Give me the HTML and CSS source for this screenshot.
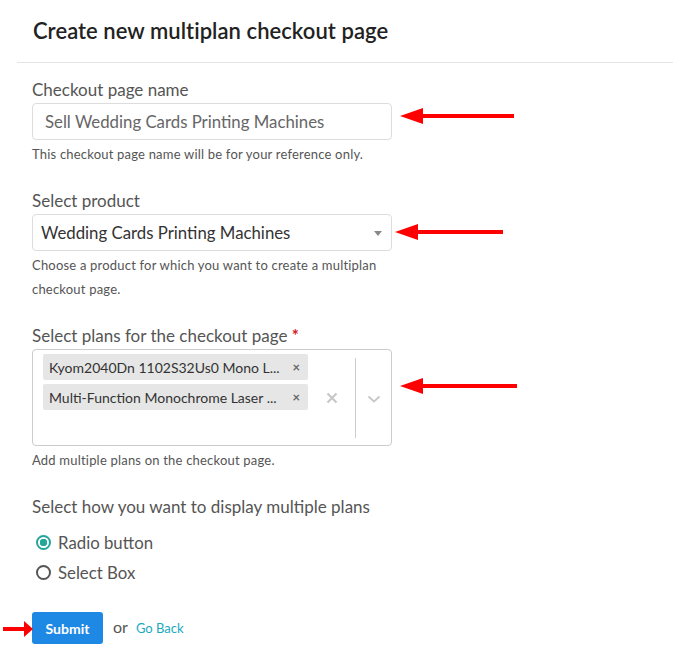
FILE: index.html
```html
<!DOCTYPE html>
<html lang="en">
<head>
<meta charset="utf-8">
<title>Create new multiplan checkout page</title>
<link rel="stylesheet" href="styles.css">
</head>
<body>
<div class="page">
  <div class="header"><h1 class="title">Create new multiplan checkout page</h1></div>
  <form class="form">
    <div class="group first">
      <label class="label">Checkout page name</label>
      <div class="input">Sell Wedding Cards Printing Machines</div>
      <p class="help">This checkout page name will be for your reference only.</p>
    </div>
    <div class="group">
      <label class="label">Select product</label>
      <div class="input select">
        <span class="select-text">Wedding Cards Printing Machines</span>
        <span class="caret"></span>
      </div>
      <p class="help narrow">Choose a product for which you want to create a multiplan checkout page.</p>
    </div>
    <div class="group">
      <label class="label">Select plans for the checkout page <span class="req">*</span></label>
      <div class="multi">
        <div class="tags">
          <div class="tag"><span class="tag-text">Kyom2040Dn 1102S32Us0 Mono L...</span><span class="tag-x">×</span></div>
          <div class="tag"><span class="tag-text">Multi-Function Monochrome Laser ...</span><span class="tag-x">×</span></div>
        </div>
        <div class="clear">
          <svg width="12" height="12" viewBox="0 0 12 12"><path d="M1.5 1.5 L10.5 10.5 M10.5 1.5 L1.5 10.5" stroke="#c8c8c8" stroke-width="2.2" fill="none"/></svg>
        </div>
        <div class="sep"></div>
        <div class="chev">
          <svg width="14" height="8" viewBox="0 0 14 8"><path d="M1.5 1.5 L7 6.5 L12.5 1.5" stroke="#c8c8c8" stroke-width="1.8" fill="none"/></svg>
        </div>
      </div>
      <p class="help">Add multiple plans on the checkout page.</p>
    </div>
    <div class="group">
      <label class="label">Select how you want to display multiple plans</label>
      <div class="radios">
        <div class="radio-row"><span class="radio on"></span><span class="radio-label">Radio button</span></div>
        <div class="radio-row"><span class="radio"></span><span class="radio-label">Select Box</span></div>
      </div>
    </div>
    <div class="actions">
      <button type="button" class="submit">Submit</button>
      <span class="or">or</span>
      <a class="back" href="#">Go Back</a>
    </div>
  </form>

  <svg class="arrow a1" width="120" height="20" viewBox="0 0 120 20"><path d="M0 10 L23 2 L23 8 L114 8 L114 12 L23 12 L23 18 Z" fill="#f00"/></svg>
  <svg class="arrow a2" width="120" height="20" viewBox="0 0 120 20"><path d="M0 10 L23 2 L23 8 L108 8 L108 12 L23 12 L23 18 Z" fill="#f00"/></svg>
  <svg class="arrow a3" width="120" height="20" viewBox="0 0 120 20"><path d="M0 10 L23 2 L23 8 L117 8 L117 12 L23 12 L23 18 Z" fill="#f00"/></svg>
  <svg class="arrow a4" width="34" height="20" viewBox="0 0 34 20"><path d="M31 10 L22 2 L22 8 L1 8 L1 12 L22 12 L22 18 Z" fill="#f00"/></svg>
</div>
</body>
</html>
```
FILE: styles.css
```css
html, body {
  margin: 0;
  padding: 0;
  background: #fff;
}
body {
  font-family: Lato, "Open Sans", sans-serif;
  color: #555;
}
.page {
  position: relative;
  width: 673px;
  height: 656px;
  overflow: hidden;
}
.header {
  margin-left: 17px;
  padding: 19px 0 19px 16px;
  border-bottom: 1px solid #e4e4e4;
}
.title {
  margin: 0;
  font-size: 22px;
  line-height: 24px;
  font-weight: 600;
  color: #222;
  letter-spacing: 0.05px;
}
.form {
  padding-left: 32px;
}
.group {
  margin-top: 25px;
}
.group.first {
  margin-top: 17px;
}
.label {
  display: block;
  font-size: 17px;
  line-height: 20px;
  color: #555;
  margin-bottom: 3px;
}
.req {
  color: #d0202a;
  font-weight: 700;
}
.input {
  box-sizing: border-box;
  width: 360px;
  height: 37px;
  border: 1px solid #ddd;
  border-radius: 4px;
  padding: 0 12px;
  display: flex;
  align-items: center;
  font-size: 16.8px;
  color: #666;
}
.select {
  padding: 0 9px 0 8px;
  justify-content: space-between;
  color: #333;
}
.caret {
  width: 0;
  height: 0;
  border-left: 4px solid transparent;
  border-right: 4px solid transparent;
  border-top: 5px solid #888;
  margin-top: 2px;
}
.help {
  margin: 2px 0 0;
  font-size: 13px;
  line-height: 24px;
  letter-spacing: 0.2px;
  color: #555;
}
.help.narrow {
  width: 360px;
}
.multi {
  box-sizing: border-box;
  width: 360px;
  height: 97px;
  border: 1px solid #ccc;
  border-radius: 4px;
  display: flex;
  padding: 4px 0 0 10px;
}
.tags {
  display: flex;
  flex-direction: column;
  gap: 4px;
}
.tag {
  box-sizing: border-box;
  width: 265px;
  height: 26px;
  background: #e6e6e6;
  border-radius: 2px;
  display: flex;
  align-items: center;
  justify-content: space-between;
  padding: 0 8px 0 6px;
  font-size: 14px;
  color: #333;
}
.tag-x {
  font-size: 13px;
  font-weight: 700;
  color: #666;
}
.clear {
  width: 47px;
  display: flex;
  align-items: center;
  justify-content: center;
  margin-top: 38px;
  height: 12px;
}
.sep {
  width: 1px;
  height: 80px;
  background: #ccc;
  margin-top: 4px;
}
.chev {
  flex: 1;
  display: flex;
  justify-content: center;
  margin-top: 41px;
  height: 8px;
}
.radios {
  margin-top: 10px;
}
.radio-row {
  height: 30px;
  display: flex;
  align-items: center;
  gap: 7px;
  padding-left: 4px;
}
.radio {
  box-sizing: border-box;
  width: 15px;
  height: 15px;
  border: 2px solid #555;
  border-radius: 50%;
}
.radio.on {
  border-color: #26a69a;
  background: radial-gradient(circle, #26a69a 0 3.5px, #fff 4px);
}
.radio-label {
  font-size: 16.8px;
  color: #555;
}
.actions {
  margin-top: 25px;
  display: flex;
  align-items: center;
}
.submit {
  width: 71px;
  height: 32px;
  border: none;
  border-radius: 3px;
  background: #1e88e5;
  color: #fff;
  font-family: Lato, "Open Sans", sans-serif;
  font-size: 14px;
  font-weight: 700;
  padding: 0;
}
.or {
  margin-left: 10px;
  font-size: 16px;
  color: #555;
  margin-top: -3px;
}
.back {
  margin-left: 8px;
  font-size: 13px;
  color: #1ba9be;
  text-decoration: none;
}
.arrow {
  position: absolute;
}
.a1 { left: 400px; top: 106px; }
.a2 { left: 395px; top: 222px; }
.a3 { left: 400px; top: 376px; }
.a4 { left: 2px; top: 619px; }
```
